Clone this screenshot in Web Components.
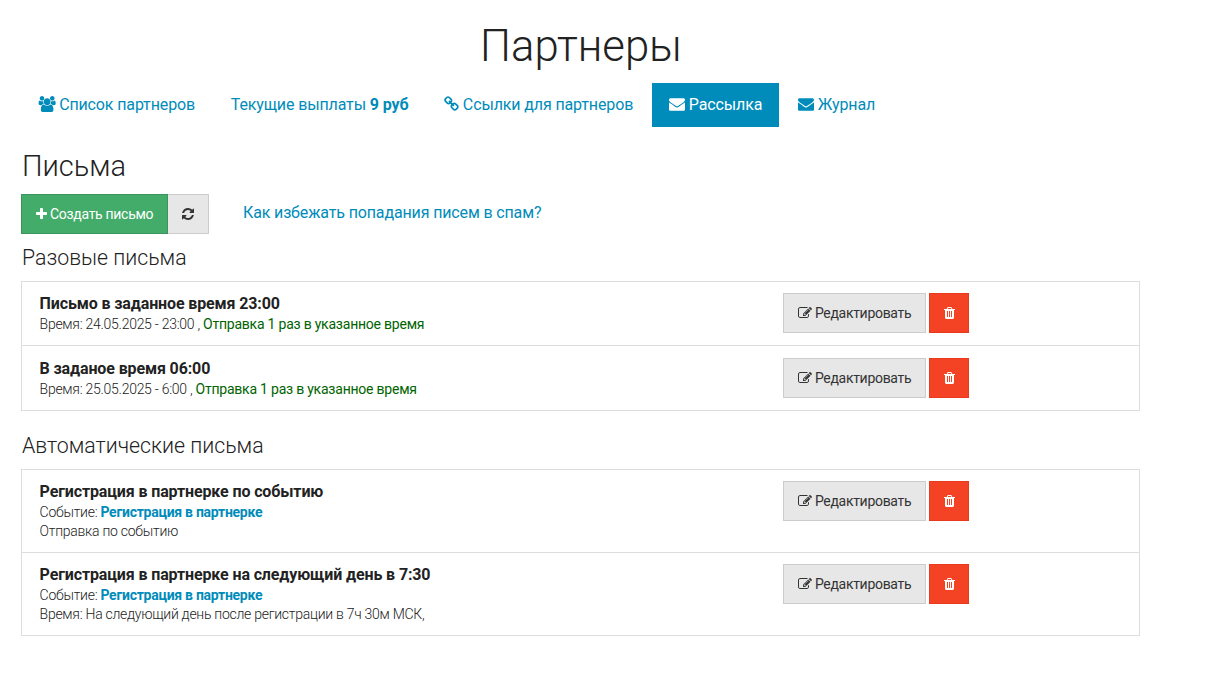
<!DOCTYPE html>
<html lang="ru"><head><meta charset="utf-8"><title>Партнеры</title>
<style>
html,body{margin:0;padding:0;background:#fff}
body{font-family:Roboto,"Noto Sans",sans-serif;color:#222;font-size:16px}
</style></head><body>
<partners-page>
  <page-title>Партнеры</page-title>
  <tab-bar>
    <tab-item icon="users">Список партнеров</tab-item>
    <tab-item>Текущие выплаты <b>9 руб</b></tab-item>
    <tab-item icon="link">Ссылки для партнеров</tab-item>
    <tab-item icon="envelope" active>Рассылка</tab-item>
    <tab-item icon="envelope">Журнал</tab-item>
  </tab-bar>
  <section-heading level="1">Письма</section-heading>
  <mail-toolbar></mail-toolbar>
  <section-heading level="2">Разовые письма</section-heading>
  <mail-list>
    <mail-row title="Письмо в заданное время 23:00">
      <div>Время: 24.05.2025 - 23:00 , <span style="color:#006400;font-weight:400;letter-spacing:-.22px">Отправка 1 раз в указанное время</span></div>
    </mail-row>
    <mail-row title="В заданое время 06:00" lower>
      <div>Время: 25.05.2025 - 6:00 , <span style="color:#006400;font-weight:400;letter-spacing:-.22px">Отправка 1 раз в указанное время</span></div>
    </mail-row>
  </mail-list>
  <section-heading level="3">Автоматические письма</section-heading>
  <mail-list>
    <mail-row title="Регистрация в партнерке по событию">
      <div>Событие: <b style="color:#008cba;font-weight:700">Регистрация в партнерке</b></div>
      <div>Отправка по событию</div>
    </mail-row>
    <mail-row title="Регистрация в партнерке на следующий день в 7:30">
      <div>Событие: <b style="color:#008cba;font-weight:700">Регистрация в партнерке</b></div>
      <div>Время: На следующий день после регистрации в 7ч 30м МСК,</div>
    </mail-row>
  </mail-list>
</partners-page>
<script>
const ICONS={
users:['0 0 2048 1792','M657 896q-162 5-265 128h-134q-82 0-138-40.500t-56-118.500q0-353 124-353 6 0 43.500 21t97.500 42.500 119 21.500q67 0 133-23-5 37-5 66 0 139 81 256zm1071 637q0 120-73 189.500t-194 69.500h-874q-121 0-194-69.500t-73-189.500q0-53 3.500-103.500t14-109 26.500-108.500 43-97.500 62-81 85.500-53.500 111.500-20q10 0 43 21.500t73 48 107 48 135 21.500 135-21.500 107-48 73-48 43-21.500q61 0 111.500 20t85.500 53.500 62 81 43 97.500 26.500 108.500 14 109 3.500 103.500zm-1024-1277q0 106-75 181t-181 75-181-75-75-181 75-181 181-75 181 75 75 181zm704 384q0 159-112.500 271.500t-271.500 112.500-271.500-112.500-112.500-271.500 112.500-271.500 271.500-112.500 271.500 112.500 112.500 271.500zm576 225q0 78-56 118.500t-138 40.500h-134q-103-123-265-128 81-117 81-256 0-29-5-66 66 23 133 23 59 0 119-21.500t97.500-42.500 43.500-21q124 0 124 353zm-128-609q0 106-75 181t-181 75-181-75-75-181 75-181 181-75 181 75 75 181z'],
link:['64 0 1664 1792','M1520 1216q0-40-28-68l-208-208q-28-28-68-28-42 0-72 32 3 3 19 18.500t21.500 21.500 15 19 13 25.500 3.500 27.500q0 40-28 68t-68 28q-15 0-27.500-3.500t-25.500-13-19-15-21.500-21.500-18.500-19q-33 31-33 73 0 40 28 68l206 207q27 27 68 27 40 0 68-26l147-146q28-28 28-67zm-703-705q0-40-28-68l-206-207q-28-28-68-28-39 0-68 27l-147 146q-28 28-28 67 0 40 28 68l208 208q27 27 68 27 42 0 72-31-3-3-19-18.500t-21.500-21.500-15-19-13-25.500-3.500-27.500q0-40 28-68t68-28q15 0 27.500 3.500t25.500 13 19 15 21.500 21.500 18.500 19q33-31 33-73zm895 705q0 120-85 203l-147 146q-83 83-203 83-121 0-204-85l-206-207q-83-83-83-203 0-123 88-209l-88-88q-86 88-208 88-120 0-204-84l-208-208q-84-84-84-204t85-203l147-146q83-83 203-83 121 0 204 85l206 207q83 83 83 203 0 123-88 209l88 88q86-88 208-88 120 0 204 84l208 208q84 84 84 204z'],
envelope:['0 0 1792 1792','M1792 710v794q0 66-47 113t-113 47h-1472q-66 0-113-47t-47-113v-794q44 49 101 87 362 246 497 345 57 42 92.500 65.500t94.500 48 110 24.500h2q51 0 110-24.500t94.500-48 92.500-65.500q170-123 498-345 57-39 100-87zm0-294q0 79-49 151t-122 123q-376 261-468 325-10 7-42.500 30.500t-54 38-52 32.500-57.500 27-50 9h-2q-23 0-50-9t-57.500-27-52-32.500-54-38-42.500-30.500q-91-64-262-182.500t-205-142.500q-62-42-117-115.500t-55-136.500q0-78 41.500-130t118.500-52h1472q65 0 112.500 47t47.500 113z'],
plus:['192 0 1408 1792','M1600 736v192q0 40-28 68t-68 28h-416v416q0 40-28 68t-68 28h-192q-40 0-68-28t-28-68v-416h-416q-40 0-68-28t-28-68v-192q0-40 28-68t68-28h416v-416q0-40 28-68t68-28h192q40 0 68 28t28 68v416h416q40 0 68 28t28 68z'],
refresh:['128 0 1536 1792','M1639 1056q0 5-1 7-64 268-268 434.500t-478 166.500q-146 0-282.500-55t-243.500-157l-129 129q-19 19-45 19t-45-19-19-45v-448q0-26 19-45t45-19h448q26 0 45 19t19 45-19 45l-137 137q71 66 161 102t187 36q134 0 250-65t186-179q11-17 53-117 8-23 30-23h192q13 0 22.500 9.500t9.500 22.500zm25-800v448q0 26-19 45t-45 19h-448q-26 0-45-19t-19-45 19-45l138-138q-148-137-349-137-134 0-250 65t-186 179q-11 17-53 117-8 23-30 23h-199q-13 0-22.500-9.500t-9.500-22.500v-7q65-268 270-434.500t480-166.500q146 0 284 55.500t245 156.500l130-129q19-19 45-19t45 19 19 45z'],
edit:['0 0 1792 1792','M888 1184l116-116-152-152-116 116v56h96v96h56zm440-720q-16-16-33 1l-350 350q-17 17-1 33t33-1l350-350q17-17 1-33zm80 594v190q0 119-84.500 203.500t-203.500 84.500h-832q-119 0-203.500-84.500t-84.500-203.500v-832q0-119 84.500-203.500t203.500-84.500h832q63 0 117 25 15 7 18 23 3 17-9 29l-49 49q-14 14-32 8-23-6-45-6h-832q-66 0-113 47t-47 113v832q0 66 47 113t113 47h832q66 0 113-47t47-113v-126q0-13 9-22l64-64q15-15 35-7t20 29zm-96-738l288 288-672 672h-288v-288zm444 132l-92 92-288-288 92-92q28-28 68-28t68 28l152 152q28 28 28 68t-28 68z'],
trash:['192 0 1408 1792','M704 1376v-704q0-14-9-23t-23-9h-64q-14 0-23 9t-9 23v704q0 14 9 23t23 9h64q14 0 23-9t9-23zm256 0v-704q0-14-9-23t-23-9h-64q-14 0-23 9t-9 23v704q0 14 9 23t23 9h64q14 0 23-9t9-23zm256 0v-704q0-14-9-23t-23-9h-64q-14 0-23 9t-9 23v704q0 14 9 23t23 9h64q14 0 23-9t9-23zm-544-992h448l-48-117q-7-9-17-11h-317q-10 2-17 11zm928 32v64q0 14-9 23t-23 9h-96v948q0 83-47 143.500t-113 60.500h-832q-66 0-113-58.500t-47-141.500v-952h-96q-14 0-23-9t-9-23v-64q0-14 9-23t23-9h309l70-167q15-37 54-63t79-26h320q40 0 79 26t54 63l70 167h309q14 0 23 9t9 23z']
};
function icon(n,extra=''){const [vb,d]=ICONS[n];const w=vb.split(' ')[2]/1792;
 return `<svg viewBox="${vb}" style="width:${w}em;height:1em;vertical-align:-.143em;fill:currentColor;${extra}" aria-hidden="true"><path d="${d}"/></svg>`;}
function def(name,render){customElements.define(name,class extends HTMLElement{
  constructor(){super();this.attachShadow({mode:'open'});}
  connectedCallback(){this.shadowRoot.innerHTML=render(this);}
});}
def('partners-page',()=>`<style>:host{display:block;width:1225px;box-sizing:border-box}</style><slot></slot>`);
def('page-title',()=>`<style>:host{display:block;text-align:center;font-weight:300;font-size:43.7px;line-height:62px;padding-top:15px;padding-right:63px;color:#222}</style><slot></slot>`);
def('tab-bar',()=>`<style>:host{display:flex;gap:1.75px;margin:6px 0 0 21px;height:44px}</style><slot></slot>`);
def('tab-item',(e)=>{const n=e.getAttribute('icon');return `<style>
:host{display:block;font-size:16px;line-height:44px;padding:0 17px;color:#008cba;white-space:nowrap;letter-spacing:-.13px}
:host([active]){background:#008cba;color:#fff}
::slotted(b){font-weight:700}
</style>${n?icon(n,n==='users'?'margin-right:-1px':'')+' ':''}<slot></slot>`});
def('section-heading',(e)=>{const l=e.getAttribute('level');
 const m={1:'font-size:29px;line-height:40px;margin:19px 0 0 22px',2:'font-size:21.3px;line-height:28px;margin:10px 0 -1px 22px',3:'font-size:21.3px;line-height:28px;margin:21px 0 -1px 22px'}[l];
 return `<style>:host{display:block;font-weight:300;color:#222;${m}}</style><slot></slot>`});
def('mail-toolbar',()=>`<style>
:host{display:flex;align-items:center;margin:8px 0 0 21px;height:40px}
.b{box-sizing:border-box;height:40px;display:flex;align-items:center;justify-content:center;font-size:14px;white-space:pre}
.c{width:147px;background:#43ac6a;border:1px solid #3a945b;color:#fff;letter-spacing:-.3px}
.r{width:41px;background:#e7e7e7;border:1px solid #ccc;color:#333;border-left:0}
a{color:#008cba;font-size:16px;margin-left:34px;position:relative;top:-2px;letter-spacing:-.14px}
</style><div class="b c">${icon('plus')} Создать письмо</div><div class="b r">${icon('refresh')}</div><a>Как избежать попадания писем в спам?</a>`);
def('mail-list',()=>`<style>:host{display:block;width:1119px;box-sizing:border-box;margin:10px 0 0 21px;border:1px solid #ddd}
::slotted(mail-row:not(:last-child)){border-bottom:1px solid #ddd}</style><slot></slot>`);
def('mail-row',(e)=>`<style>
:host{display:flex;justify-content:space-between;box-sizing:content-box;padding:11px 0 11px 17.6px}
:host([lower]){padding-top:12px}
.m{flex:1;min-width:0}
.t{font-weight:700;font-size:16px;line-height:22px;color:#222;letter-spacing:-.13px}
.s{font-size:14px;font-weight:300;line-height:19px;color:#222;letter-spacing:-.27px}
.a{display:flex;gap:3px;width:356px;flex:none;align-self:flex-start;letter-spacing:-.3px}
.b{box-sizing:border-box;height:40px;display:flex;align-items:center;justify-content:center;font-size:14px;white-space:pre}
.e{width:143px;background:#e7e7e7;border:1px solid #ccc;color:#333}
.d{width:40px;background:#f44225;border:1px solid #ea3a1d;color:#fff}
</style><div class="m"><div class="t">${e.getAttribute('title')}</div><div class="s"><slot></slot></div></div>
<div class="a"><div class="b e">${icon('edit')} Редактировать</div><div class="b d">${icon('trash')}</div></div>`);
</script>
</body></html>
